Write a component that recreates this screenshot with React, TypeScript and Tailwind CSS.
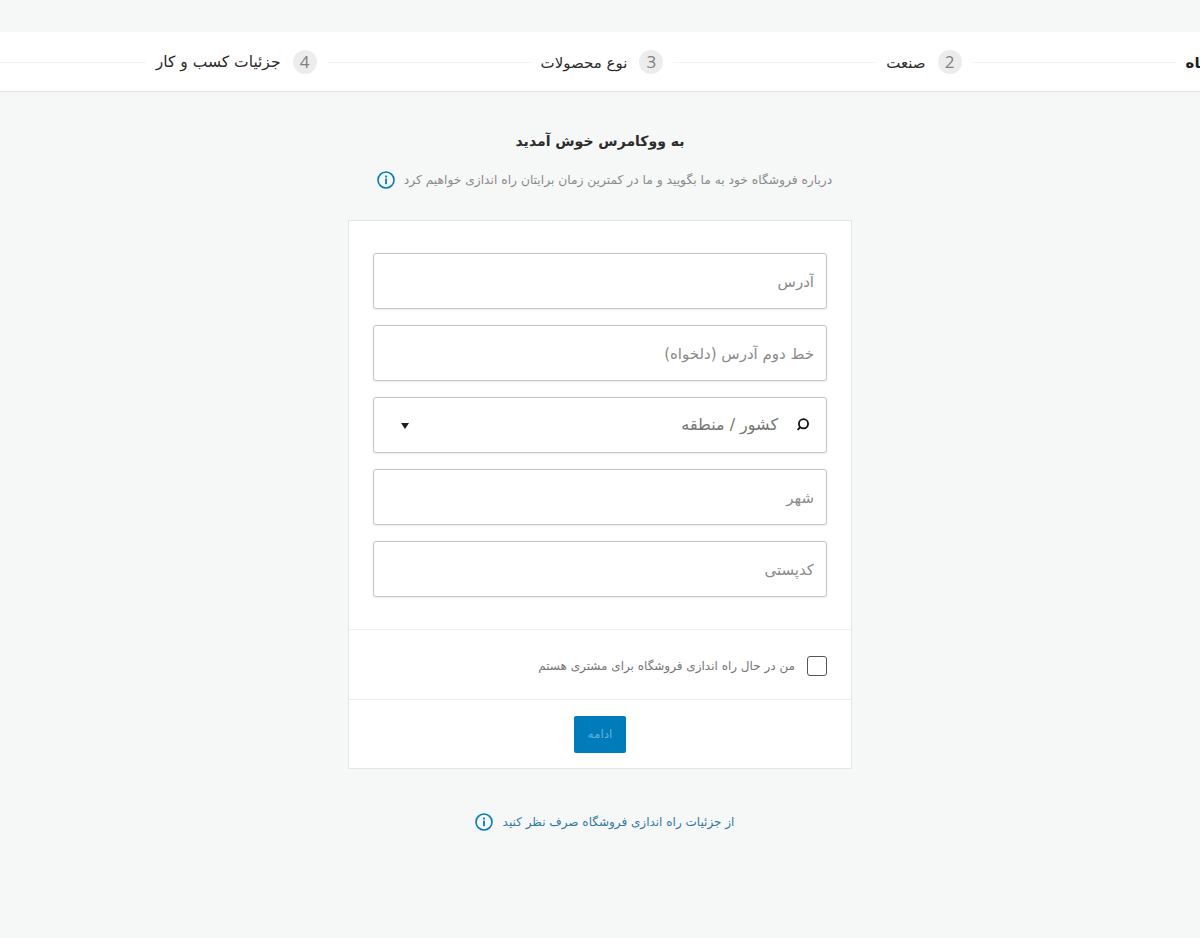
import { useState } from 'react'

const font = "font-['DejaVu_Sans',sans-serif]"

const steps = [
  { n: 2, label: 'صنعت', size: 'text-[15px]', line: 'w-[204px]' },
  { n: 3, label: 'نوع محصولات', size: 'text-[15px]', line: 'w-[203px]' },
  { n: 4, label: 'جزئیات کسب و کار', size: 'text-[15.5px]', line: 'w-[204px]' },
]

const InfoIcon = () => (
  <svg width="18" height="18" viewBox="0 0 18 18" fill="none" className="shrink-0">
    <circle cx="9" cy="9" r="8" stroke="#007cba" strokeWidth="1.6" />
    <rect x="8.1" y="7.6" width="1.8" height="5.6" fill="#007cba" />
    <rect x="8.1" y="4.6" width="1.8" height="1.9" fill="#007cba" />
  </svg>
)

const Field = ({ placeholder }: { placeholder: string }) => (
  <input
    placeholder={placeholder}
    className="block w-full h-14 px-3 pt-[2px] bg-white border border-[#c4c4c4] rounded-[3px] shadow-[0_1px_2px_rgba(0,0,0,0.08)] text-[15px] outline-none placeholder:text-[#8a8a8a]"
  />
)

export default function App() {
  const [forClient, setForClient] = useState(false)

  return (
    <div dir="rtl" className={`min-h-[938px] bg-[#f6f7f7] pt-8 overflow-hidden ${font}`}>
      <div className="h-[60px] pt-px bg-white border-b border-[#dfe3e3] overflow-hidden flex items-center">
        <div className="flex items-center shrink-0 mr-[-52px]">
          <span className="pt-[2px] text-[15px] font-bold text-[#1e1e1e] whitespace-nowrap">
            فروشگاه
          </span>
          {steps.map(s => (
            <div key={s.n} className="flex items-center">
              <div className={`h-px bg-[#f3f3f3] mx-[10px] ${s.line}`} />
              <div className="w-6 h-6 rounded-full bg-[#ececec] text-[#808080] text-[17px] flex items-center justify-center font-['Open_Sans',sans-serif]">
                {s.n}
              </div>
              <span className={`mr-3 pt-[2px] text-[#2c2c2c] whitespace-nowrap ${s.size}`}>{s.label}</span>
            </div>
          ))}
          <div className="w-[204px] h-px bg-[#f3f3f3] mr-[10px]" />
        </div>
      </div>

      <div className="flex flex-col items-center">
        <h1 className="mt-[38px] text-[14px] leading-[22px] font-bold text-[#2c2c2c]">
          به ووکامرس خوش آمدید
        </h1>
        <div className="mt-[19px] pl-[9px] flex items-center gap-[9px] text-[12.25px] leading-[18px] text-[#8a8a8a]">
          <span>درباره فروشگاه خود به ما بگویید و ما در کمترین زمان برایتان راه اندازی خواهیم کرد</span>
          <InfoIcon />
        </div>

        <div className="mt-[31px] w-[504px] bg-white border border-[#e2e4e7]">
          <div className="px-6 pt-8 pb-8 flex flex-col gap-4 border-b border-[#eeeeee]">
            <Field placeholder="آدرس" />
            <Field placeholder="خط دوم آدرس (دلخواه)" />
            <div className="h-14 px-3 flex items-center bg-white border border-[#c4c4c4] rounded-[3px] shadow-[0_1px_2px_rgba(0,0,0,0.08)]">
              <svg width="16" height="16" viewBox="0 0 16 16" fill="none" className="mr-[3px] shrink-0">
                <circle cx="8.5" cy="6.8" r="4.6" stroke="#111" strokeWidth="1.8" />
                <path d="M5.2 10.2 2.6 13" stroke="#111" strokeWidth="1.8" />
              </svg>
              <span className="mr-[17px] text-[16px] text-[#757575]">کشور / منطقه</span>
              <span className="mr-auto ml-[15px] mt-[2px] w-0 h-0 border-x-[4px] border-x-transparent border-t-[6px] border-t-[#1e1e1e]" />
            </div>
            <Field placeholder="شهر" />
            <Field placeholder="کدپستی" />
          </div>

          <label className="h-[70px] px-6 pt-[2px] flex items-center gap-3 border-b border-[#eeeeee] cursor-pointer">
            <input
              type="checkbox"
              checked={forClient}
              onChange={e => setForClient(e.target.checked)}
              className="appearance-none w-5 h-5 border border-[#555555] rounded-[3px] bg-white checked:bg-[#007cba]"
            />
            <span className="text-[12px] text-[#757575]">من در حال راه اندازی فروشگاه برای مشتری هستم</span>
          </label>

          <div className="h-[68px] flex items-center justify-center">
            <button className="w-[52px] h-[37px] bg-[#007cba] rounded-[2px] text-[12px] text-[#66b0d6]">
              ادامه
            </button>
          </div>
        </div>

        <a className="mt-11 pl-[9px] flex items-center gap-[10px] text-[12px] leading-[18px] text-[#2f7aa5]">
          <span>از جزئیات راه اندازی فروشگاه صرف نظر کنید</span>
          <InfoIcon />
        </a>
      </div>
    </div>
  )
}
